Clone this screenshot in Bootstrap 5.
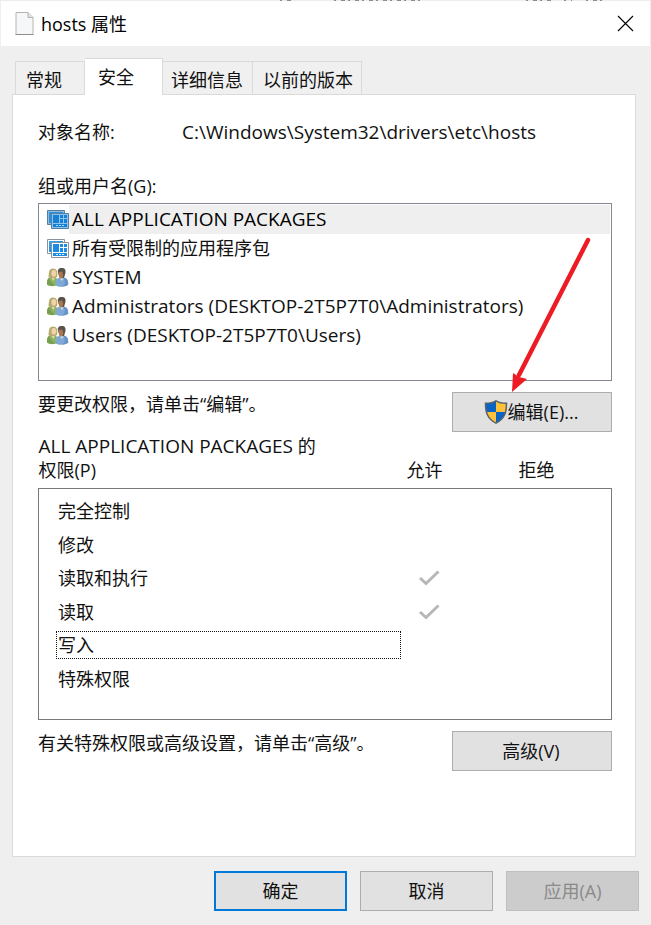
<!DOCTYPE html>
<html lang="zh-CN">
<head>
<meta charset="utf-8">
<meta name="viewport" content="width=device-width, initial-scale=1">
<title>hosts 属性</title>
<link href="https://cdn.jsdelivr.net/npm/bootstrap@5.3.0/dist/css/bootstrap.min.css" rel="stylesheet">
<style>
  body { background: #efefef; color: #111; font: 18px/24px "Open Sans", "Noto Sans CJK SC", sans-serif; }
  .latin { font-size: 19px; }
  .behind { height: 1px; background: #ececec; }
  .title-bar { height: 45px; padding: 0 16px 0 14px; margin: 0 1px; background: #fff; color: #000; }
  .title-bar h1 { padding-left: 6px; font-size: 18px; line-height: 24px; }
  .close-button { line-height: 0; }
  .dialog-main { padding: 12px 12px 14px; }
  .nav-tabs { border: 0; padding-left: 3px; }
  .nav-tabs .nav-link { height: 33px; margin: 0; padding: 3px 9px 0 8px; border: 1px solid #dadada; border-width: 1px 1px 0 0; border-radius: 0; background: #f0f0f0; color: #111; font-size: 18px; line-height: 24px; }
  .nav-tabs .first-tab { border-left-width: 1px; padding: 3px 22px 0 10px; }
  .nav-tabs .last-tab { padding-left: 10px; padding-right: 8px; }
  .nav-tabs .nav-link.active { height: 37px; margin-bottom: -1px; padding: 3px 28px 3px 13px; border-color: #dadada; background: #fff; color: #111; position: relative; }
  .sheet { margin-right: 3px; padding: 25px 23px 24px 25px; border: 1px solid #dadada; background: #fff; }
  .object-label { width: 144px; }
  .group-label { margin-top: 30px; }
  .principals { min-height: 178px; margin-top: 5px; padding: 1px 1px 30px 7px; border: 1px solid #828790; border-radius: 0; background: #fff; }
  .principals .principal { height: 29px; padding: 0; border: 0; background: none; color: #111; line-height: 29px; text-align: left; }
  .principal svg { width: 23px; height: 22px; flex: none; }
  .principal .caption { padding-left: 3px; flex: 1; white-space: nowrap; }
  .principal.chosen .caption { background: #efefef; color: #000; }
  .dialog-button { height: 40px; padding: 0 10px 0 8px; border: 1px solid #adadad; border-radius: 0; background: #e1e1e1; color: #111; font-size: 18px; line-height: 24px; }
  .side-button { width: 160px; }
  .foot-button { width: 133px; padding: 0 8px; }
  .default-button { border: 2px solid #0078d7; }
  .dialog-button:disabled { border-color: #bfbfbf; background: #ccc; color: #8a8a8a; opacity: 1; }
  .hint-row { margin-top: 11px; }
  .pointer { position: absolute; right: 19px; bottom: 40px; pointer-events: none; }
  .rights { width: 100%; margin-top: 2px; border-collapse: collapse; }
  .rights th { padding: 0 0 6px; font-weight: 400; vertical-align: bottom; }
  .rights tbody { border: 1px solid #7a7a7a; }
  .rights tbody th { height: 34px; padding: 3px 0 3px 17px; vertical-align: middle; }
  .rights tbody td { padding: 3px 0; vertical-align: middle; text-align: center; }
  .rights tbody svg { display: block; margin: 0 auto; }
  .rights tbody tr:nth-child(even) th { height: 33px; padding-bottom: 2px; }
  .rights tbody tr:first-child th { height: 39px; padding-top: 8px; }
  .rights tbody tr:last-child th { height: 57px; padding-bottom: 26px; }
  .right-name { display: block; height: 28px; padding: 0 1px; border: 1px solid transparent; line-height: 26px; }
  .right-name.focused { border: 1px dotted #111; }
  .rights .col-allow { width: 56px; padding-left: 6px; }
  .col-gap { width: 62px; }
  .col-deny { width: 93px; }
  .foot { gap: 13px; padding-top: 14px; }
</style>
<script src="https://cdn.jsdelivr.net/npm/bootstrap@5.3.0/dist/js/bootstrap.bundle.min.js"></script>
</head>
<body class="d-flex flex-column min-vh-100">
<!-- Shared icons -->
<svg width="0" height="0" class="position-absolute" aria-hidden="true">
  <defs>
    <linearGradient id="blue" x1="0" y1="0" x2="1" y2="1"><stop offset="0" stop-color="#38a8f5"/><stop offset="1" stop-color="#0878d8"/></linearGradient>
    <symbol id="package" viewBox="0 0 23 22">
      <path d="M1.500 1.500h17v14h-17z" fill="#fff" stroke="#8b9299"/>
      <path d="M3 3h14v11H3z" fill="url(#blue)"/>
      <path d="M5.500 4.500h17v15h-17z" fill="#fff" stroke="#8b9299"/>
      <path d="M7 6h6v8H7zM14 6h3v3h-3zM18 6h3v3h-3zM14 10h3v4h-3zM18 10h3v4h-3zM7 15h14v3H7z" fill="#1c8ce6"/>
      <path d="M10 16.500h2M13 16.500h2M16 16.500h2" stroke="#d8efff"/>
    </symbol>
    <symbol id="package-chosen" viewBox="0 0 23 22">
      <path d="M1.500 1.500h17v14h-17z" fill="#8dbce0" stroke="#557f9f"/>
      <path d="M3 3h14v11H3z" fill="#2f8fd8"/>
      <path d="M5.500 4.500h17v15h-17z" fill="#8fc3ec" stroke="#557f9f"/>
      <path d="M7 6h6v8H7zM14 6h3v3h-3zM18 6h3v3h-3zM14 10h3v4h-3zM18 10h3v4h-3zM7 15h14v3H7z" fill="#1580d8"/>
      <path d="M10 16.500h2M13 16.500h2M16 16.500h2" stroke="#a8d8fa"/>
    </symbol>
    <symbol id="people" viewBox="0 0 23 22">
      <path d="M1 17.500c-.4-4 .6-6.500 3-7.200l5-.2c2.300 1 3 3.500 2.600 8-3 1.500-8 1.500-10.600-.600z" fill="#8fb266"/>
      <path d="M1 17.500c-.2-3 .5-5 2-6.500 1 3 3 5 6 7.500-3 .8-6.500.4-8-1z" fill="#75a04e"/>
      <path d="M5 10h4l-1.500 4z" fill="#f0d8b0"/>
      <path d="M2.500 10C3 6 2.500 1.500 7 1.500s4.500 4 4.200 8.200L9 11H4z" fill="#b5aa70"/>
      <ellipse cx="7.800" cy="6.300" rx="2.400" ry="3.400" fill="#f3d3a5"/>
      <path d="M9.700 18.500c-.2-5 1-7 3.600-8l5.500.2c3 1 3.600 4 3.400 7-3 2.500-9.500 2.800-12.500.8z" fill="#7fa8d4"/>
      <path d="M17.500 11c3 0 4.800 2 4.700 6.500-1.500 1.300-3.500 2-6 2 3-2 3.300-4.500 1.300-8.500z" fill="#6794c8"/>
      <path d="M13 10h5l-2 4z" fill="#d5e5f5"/>
      <path d="M12 6c-.8-3 .5-5 3.800-5S20 3 19.300 6.500L18 11h-4z" fill="#5a534c"/>
      <path d="M12.500 5l3.700-.5 1 3-.7 4h-2.200c-1.300-1.500-2-3.500-1.800-6.500z" fill="#a87950"/>
    </symbol>
    <symbol id="tick" viewBox="0 0 22 18">
      <path d="M2 9l6 5.500L20.500 2.500" fill="none" stroke="#b7b7b7" stroke-width="3"/>
    </symbol>
  </defs>
</svg>

<div class="behind" aria-hidden="true">
  <svg class="d-block w-100" height="1"><path d="M280 .5h14M334 .5h88M526 .5h26M564 .5h8M586 .5h16" stroke="#8c8c8c" stroke-dasharray="2 5 4 3"/></svg>
</div>

<header class="title-bar d-flex align-items-center">
  <svg width="20" height="24" viewBox="0 0 20 24" aria-hidden="true">
    <path d="M1 .5h12l5 5v17H1z" fill="#f6f7f8" stroke="#b4b4b4"/>
    <path d="M13 .5v5h5" fill="#e4e4e4" stroke="#b2b2b2"/>
    <path d="M.5 22.500h18" stroke="#8c8c8c"/>
  </svg>
  <h1 class="m-0 fw-normal flex-grow-1">hosts 属性</h1>
  <button type="button" class="close-button btn p-0 border-0" aria-label="关闭">
    <svg width="18" height="18" viewBox="0 0 18 18"><path d="M2 1l15 15M17 1L2 16" stroke="#000" stroke-width="1.100"/></svg>
  </button>
</header>

<main class="dialog-main d-flex flex-column flex-grow-1">
  <div class="nav nav-tabs align-items-end flex-nowrap" role="tablist">
    <button type="button" class="nav-link first-tab" role="tab">常规</button>
    <button type="button" class="nav-link active" role="tab" aria-selected="true" aria-controls="security">安全</button>
    <button type="button" class="nav-link" role="tab">详细信息</button>
    <button type="button" class="nav-link last-tab" role="tab">以前的版本</button>
  </div>

  <section class="sheet flex-grow-1" id="security" role="tabpanel">
    <div class="d-flex">
      <div class="object-label">对象名称:</div>
      <div class="latin">C:\Windows\System32\drivers\etc\hosts</div>
    </div>

    <div class="group-label" id="principals-label">组或用户名(G):</div>
    <div class="principals list-group" role="listbox" aria-labelledby="principals-label">
      <button type="button" class="principal chosen list-group-item list-group-item-action d-flex align-items-center" role="option" aria-selected="true"><svg aria-hidden="true"><use href="#package-chosen"/></svg><span class="caption latin">ALL APPLICATION PACKAGES</span></button>
      <button type="button" class="principal list-group-item list-group-item-action d-flex align-items-center" role="option"><svg aria-hidden="true"><use href="#package"/></svg><span class="caption">所有受限制的应用程序包</span></button>
      <button type="button" class="principal list-group-item list-group-item-action d-flex align-items-center" role="option"><svg aria-hidden="true"><use href="#people"/></svg><span class="caption latin">SYSTEM</span></button>
      <button type="button" class="principal list-group-item list-group-item-action d-flex align-items-center" role="option"><svg aria-hidden="true"><use href="#people"/></svg><span class="caption latin">Administrators (DESKTOP-2T5P7T0\Administrators)</span></button>
      <button type="button" class="principal list-group-item list-group-item-action d-flex align-items-center" role="option"><svg aria-hidden="true"><use href="#people"/></svg><span class="caption latin">Users (DESKTOP-2T5P7T0\Users)</span></button>
    </div>

    <div class="hint-row d-flex justify-content-between align-items-start">
      <div>要更改权限，请单击“编辑”。</div>
      <div class="position-relative">
        <button type="button" class="dialog-button side-button btn d-flex align-items-center justify-content-center">
          <svg width="24" height="24" viewBox="0 0 24 24" aria-hidden="true">
            <clipPath id="shield"><path d="M12 .8C9 2.800 6 3.200 1.500 3.200c0 9 1.500 15 10.500 20 9-5 10.500-11 10.500-20-4.500 0-7.500-.4-10.500-2.400z"/></clipPath>
            <g clip-path="url(#shield)">
              <path d="M0 0h12v12H0zM12 12h12v12H12z" fill="#0b64c4"/>
              <path d="M12 0h12v12H12zM0 12h12v12H0z" fill="#ffc03a"/>
            </g>
            <path d="M12 .8C9 2.800 6 3.200 1.500 3.200c0 9 1.500 15 10.500 20 9-5 10.500-11 10.500-20-4.500 0-7.500-.4-10.500-2.400z" fill="none" stroke="#56636b" stroke-width="1.500"/>
          </svg>
          <span>编辑(E)...</span>
        </button>
        <svg class="pointer" width="84" height="160" viewBox="0 0 84 160" aria-hidden="true">
          <path d="M79 8L10 143" stroke="#ed1c24" stroke-width="4.500" stroke-linecap="round"/>
          <path d="M3 160l1-19 6 4 8 2z" fill="#ed1c24"/>
        </svg>
      </div>
    </div>

    <table class="rights">
      <thead>
        <tr>
          <th scope="col"><span class="latin">ALL APPLICATION PACKAGES</span> 的<br>权限(P)</th>
          <th scope="col" class="col-allow">允许</th>
          <td class="col-gap"></td>
          <th scope="col" class="col-deny">拒绝</th>
        </tr>
      </thead>
      <tbody>
        <tr><th scope="row"><span class="right-name">完全控制</span></th><td></td><td></td><td></td></tr>
        <tr><th scope="row"><span class="right-name">修改</span></th><td></td><td></td><td></td></tr>
        <tr><th scope="row"><span class="right-name">读取和执行</span></th><td><svg width="22" height="18" role="img" aria-label="允许"><use href="#tick"/></svg></td><td></td><td></td></tr>
        <tr><th scope="row"><span class="right-name">读取</span></th><td><svg width="22" height="18" role="img" aria-label="允许"><use href="#tick"/></svg></td><td></td><td></td></tr>
        <tr><th scope="row"><span class="right-name focused">写入</span></th><td></td><td></td><td></td></tr>
        <tr><th scope="row"><span class="right-name">特殊权限</span></th><td></td><td></td><td></td></tr>
      </tbody>
    </table>

    <div class="hint-row d-flex justify-content-between align-items-start">
      <div>有关特殊权限或高级设置，请单击“高级”。</div>
      <button type="button" class="dialog-button side-button btn">高级(V)</button>
    </div>
  </section>

  <footer class="foot d-flex justify-content-end">
    <button type="button" class="dialog-button foot-button default-button btn">确定</button>
    <button type="button" class="dialog-button foot-button btn">取消</button>
    <button type="button" class="dialog-button foot-button btn" disabled>应用(A)</button>
  </footer>
</main>
</body>
</html>
